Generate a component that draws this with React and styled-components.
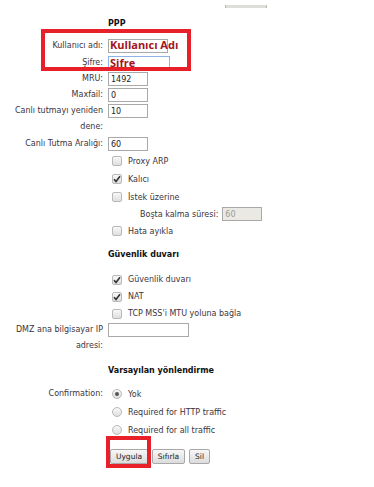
import React from 'react';
import styled, { createGlobalStyle } from 'styled-components';

const GlobalStyle = createGlobalStyle`
body {
  margin: 0;
  background: #fff;
  font-family: "DejaVu Sans", Verdana, sans-serif;
  font-size: 8px;
  color: #3b3440;
}
`;

const Page = styled.div`
position: relative;
width: 374px;
height: 487px;
overflow: hidden;
`;

const TopEdge = styled.div`
margin: 5px 0 0 225px;
width: 40px;
height: 3px;
background: #deded9;
border-left: 1px solid #b8b8b4;
border-right: 1px solid #b8b8b4;
`;

const Heading = styled.div`
margin: ${p => p.$top}px 0 0 108px;
height: 16px;
line-height: 16px;
font-weight: bold;
color: #111;
`;

const Row = styled.div`
display: grid;
grid-template-columns: 100px 1fr;
column-gap: 5px;
padding-left: 3px;
align-items: start;
height: ${p => p.$h ? `${p.$h}px` : 'auto'};
margin-top: ${p => p.$top || 0}px;
`;

const Label = styled.div`
text-align: right;
line-height: 16px;
`;

const Field = styled.div`
position: relative;
display: flex;
align-items: center;
padding-top: 1px;
`;

const TextInput = styled.input`
box-sizing: border-box;
width: ${p => p.$w}px;
height: 14px;
margin: 0;
padding: 0 2px;
border: 1px solid ${p => p.$focus ? '#8fb3e6' : '#a9a9a9'};
background: ${p => p.disabled ? '#ebe9e4' : '#fff'};
font-family: "DejaVu Sans", Verdana, sans-serif;
font-size: 8px;
color: #222;
outline: none;
&:disabled { color: #999; }
`;

const Note = styled.span`
position: absolute;
left: 2px;
top: ${p => p.$top}px;
font-family: "Open Sans", sans-serif;
font-weight: bold;
font-size: 11px;
line-height: 14px;
color: #a3141c;
white-space: nowrap;
`;

const Group = styled.div`
padding-left: 112px;
margin-top: ${p => p.$top || 0}px;
`;

const Option = styled.label`
display: flex;
align-items: center;
gap: 6px;
height: ${p => p.$h || 18}px;
`;

const Box = styled.span`
box-sizing: border-box;
width: 10px;
height: 10px;
border: 1px solid #b9b9b9;
border-radius: ${p => p.$round ? '50%' : '2px'};
background: linear-gradient(#f8f8f8, #dedede);
display: flex;
align-items: center;
justify-content: center;
flex: none;
`;

const Dot = styled.span`
width: 4px;
height: 4px;
border-radius: 50%;
background: #555;
`;

const IdleRow = styled.div`
display: flex;
align-items: center;
gap: 4px;
height: 16px;
padding-left: 140px;
`;

const Radios = styled.div`
padding-left: 4px;
`;

const Buttons = styled.div`
display: flex;
gap: 4px;
margin: 10px 0 0 110px;
`;

const Button = styled.button`
box-sizing: border-box;
height: 15px;
width: ${p => p.$w}px;
padding: 0;
border: 1px solid #a8a8a8;
border-radius: 2px;
background: linear-gradient(#f7f7f7, #dcdcdc);
font-family: "DejaVu Sans", Verdana, sans-serif;
font-size: 7.5px;
color: #222;
`;

const Mark = styled.div`
position: absolute;
left: ${p => p.$x}px;
top: ${p => p.$y}px;
width: ${p => p.$w}px;
height: ${p => p.$h}px;
box-sizing: border-box;
border: 4px solid #e8202a;
pointer-events: none;
`;

const Check = ({ on, round }) => (
  <Box $round={round}>
    {on && !round && (
      <svg width="8" height="8" viewBox="0 0 8 8">
        <path d="M1 4.2 L3 6.4 L7 1.2" fill="none" stroke="#333" strokeWidth="1.6" />
      </svg>
    )}
    {on && round && <Dot />}
  </Box>
);

function App() {
  return (
    <Page>
      <GlobalStyle />
      <TopEdge />

      <Heading $top={8}>PPP</Heading>
      <Row $top={6} $h={17}>
        <Label>Kullanıcı adı:</Label>
        <Field>
          <TextInput $w={60} readOnly />
          <Note $top={0}>Kullanıcı Adı</Note>
        </Field>
      </Row>
      <Row $h={16}>
        <Label>Şifre:</Label>
        <Field>
          <TextInput $w={62} $focus readOnly />
          <Note $top={1}>Şifre</Note>
        </Field>
      </Row>
      <Row $h={16}>
        <Label>MRU:</Label>
        <Field><TextInput $w={40} readOnly value='1492' /></Field>
      </Row>
      <Row $h={16}>
        <Label>Maxfail:</Label>
        <Field><TextInput $w={40} readOnly value='0' /></Field>
      </Row>
      <Row>
        <Label>Canlı tutmayı yeniden dene:</Label>
        <Field><TextInput $w={40} readOnly value='10' /></Field>
      </Row>
      <Row $h={16} $top={1}>
        <Label>Canlı Tutma Aralığı:</Label>
        <Field><TextInput $w={40} readOnly value='60' /></Field>
      </Row>

      <Group>
        <Option><Check />Proxy ARP</Option>
        <Option><Check on />Kalıcı</Option>
        <Option><Check />İstek üzerine</Option>
      </Group>
      <IdleRow>
        <span>Boşta kalma süresi:</span>
        <TextInput $w={40} disabled value='60' readOnly />
      </IdleRow>
      <Group>
        <Option><Check />Hata ayıkla</Option>
      </Group>

      <Heading $top={7}>Güvenlik duvarı</Heading>
      <Group $top={8}>
        <Option $h={17}><Check on />Güvenlik duvarı</Option>
        <Option $h={17}><Check on />NAT</Option>
        <Option $h={17}><Check />TCP MSS'i MTU yoluna bağla</Option>
      </Group>
      <Row>
        <Label>DMZ ana bilgisayar IP adresi:</Label>
        <Field><TextInput $w={81} readOnly /></Field>
      </Row>

      <Heading $top={9}>Varsayılan yönlendirme</Heading>
      <Row $top={6}>
        <Label style={{ lineHeight: '18px' }}>Confirmation:</Label>
        <Radios>
          <Option><Check round on />Yok</Option>
          <Option><Check round />Required for HTTP traffic</Option>
          <Option><Check round />Required for all traffic</Option>
        </Radios>
      </Row>

      <Buttons>
        <Button $w={38}>Uygula</Button>
        <Button $w={33}>Sıfırla</Button>
        <Button $w={21}>Sil</Button>
      </Buttons>

      <Mark $x={41} $y={29} $w={150} $h={42} />
      <Mark $x={106} $y={436} $w={45} $h={32} />
    </Page>
  );
}

export default App;
